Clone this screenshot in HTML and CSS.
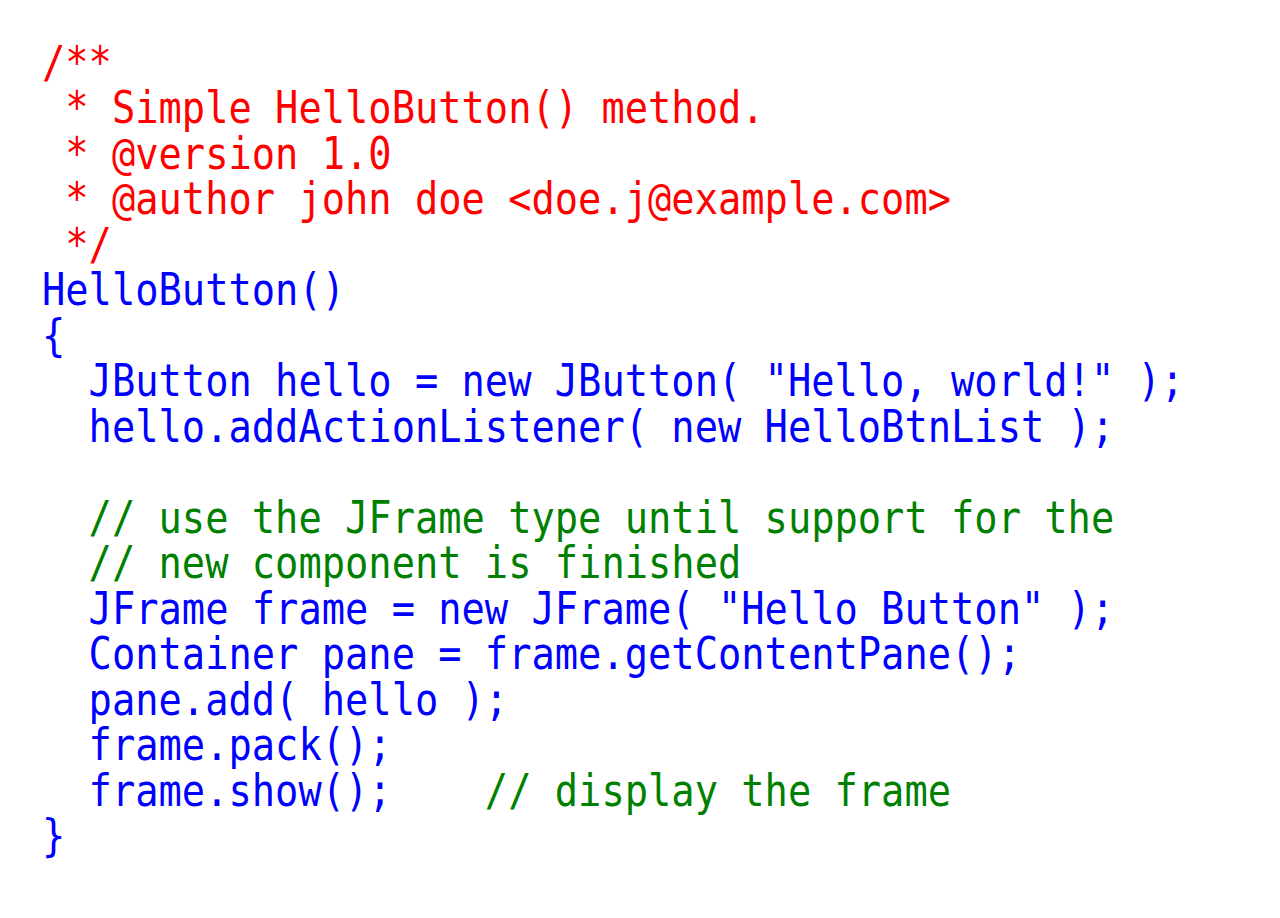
FILE: index.html
```html
<!DOCTYPE html>
<html>
<head>
<meta charset="utf-8">
<link rel="stylesheet" href="styles.css">
</head>
<body>
<pre class="code"><span class="doc">/**
 * Simple HelloButton() method.
 * @version 1.0
 * @author john doe &lt;doe.j@example.com&gt;
 */</span>
<span class="src">HelloButton()
{
  JButton hello = new JButton( "Hello, world!" );
  hello.addActionListener( new HelloBtnList );

  <span class="cmt">// use the JFrame type until support for the</span>
  <span class="cmt">// new component is finished</span>
  JFrame frame = new JFrame( "Hello Button" );
  Container pane = frame.getContentPane();
  pane.add( hello );
  frame.pack();
  frame.show();    <span class="cmt">// display the frame</span>
}</span></pre>
</body>
</html>
```
FILE: styles.css
```css
html, body {
  margin: 0;
  padding: 0;
  background: #ffffff;
}
.code {
  margin: 0;
  padding: 39.5px 0 0 42px;
  font-family: "DejaVu Sans Mono", monospace;
  font-size: 44.3px;
  line-height: 45.5px;
  color: #0000ff;
  transform: scaleX(0.874);
  transform-origin: 42px 0;
}
.doc { color: #ff0000; }
.src { color: #0000ff; }
.cmt { color: #008000; }
```
